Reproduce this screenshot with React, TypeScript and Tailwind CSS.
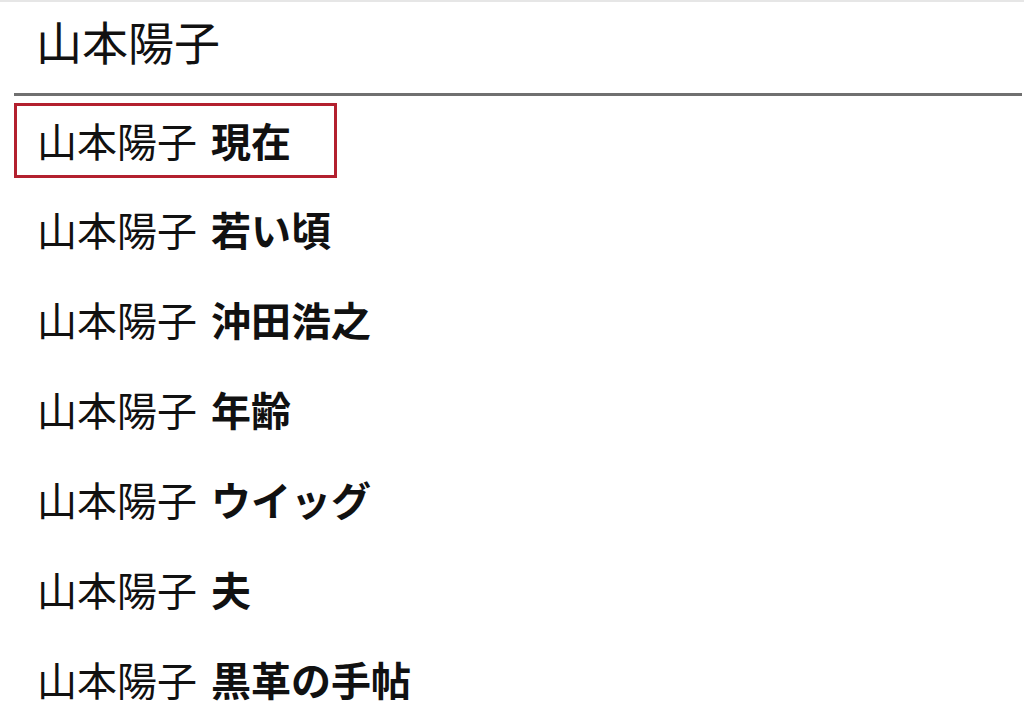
import React from "react";

const items = ["若い頃", "沖田浩之", "年齢", "ウイッグ", "夫", "黒革の手帖"];
const font = { fontFamily: '"Noto Sans CJK JP", "Noto Sans", sans-serif' };

export default function App() {
  return (
    <div className="w-[1024px] h-[723px] bg-white overflow-hidden text-[#111]" style={font}>
      <div className="h-[2px] bg-[#e6e6e6]" />
      <div className="h-[91px] flex items-center pl-[36px] pb-[16px] text-[46px] leading-none">山本陽子</div>
      <div className="ml-[14px] mr-[2px] h-[3px] bg-[#707070]" />
      <div className="flex flex-col">
        <div className="h-[88px] flex items-center pl-[14px]">
          <div className="w-[323px] h-[75px] border-[3px] border-[#b3202f] flex items-center pl-[20px] text-[40px] leading-none">
            <span>山本陽子</span>
            <span className="font-bold ml-[14px]">現在</span>
          </div>
        </div>
        {items.map((t) => (
          <div key={t} className="h-[90px] flex items-center pl-[37px] text-[40px] leading-none">
            <span>山本陽子</span>
            <span className="font-bold ml-[14px]">{t}</span>
          </div>
        ))}
      </div>
    </div>
  );
}
